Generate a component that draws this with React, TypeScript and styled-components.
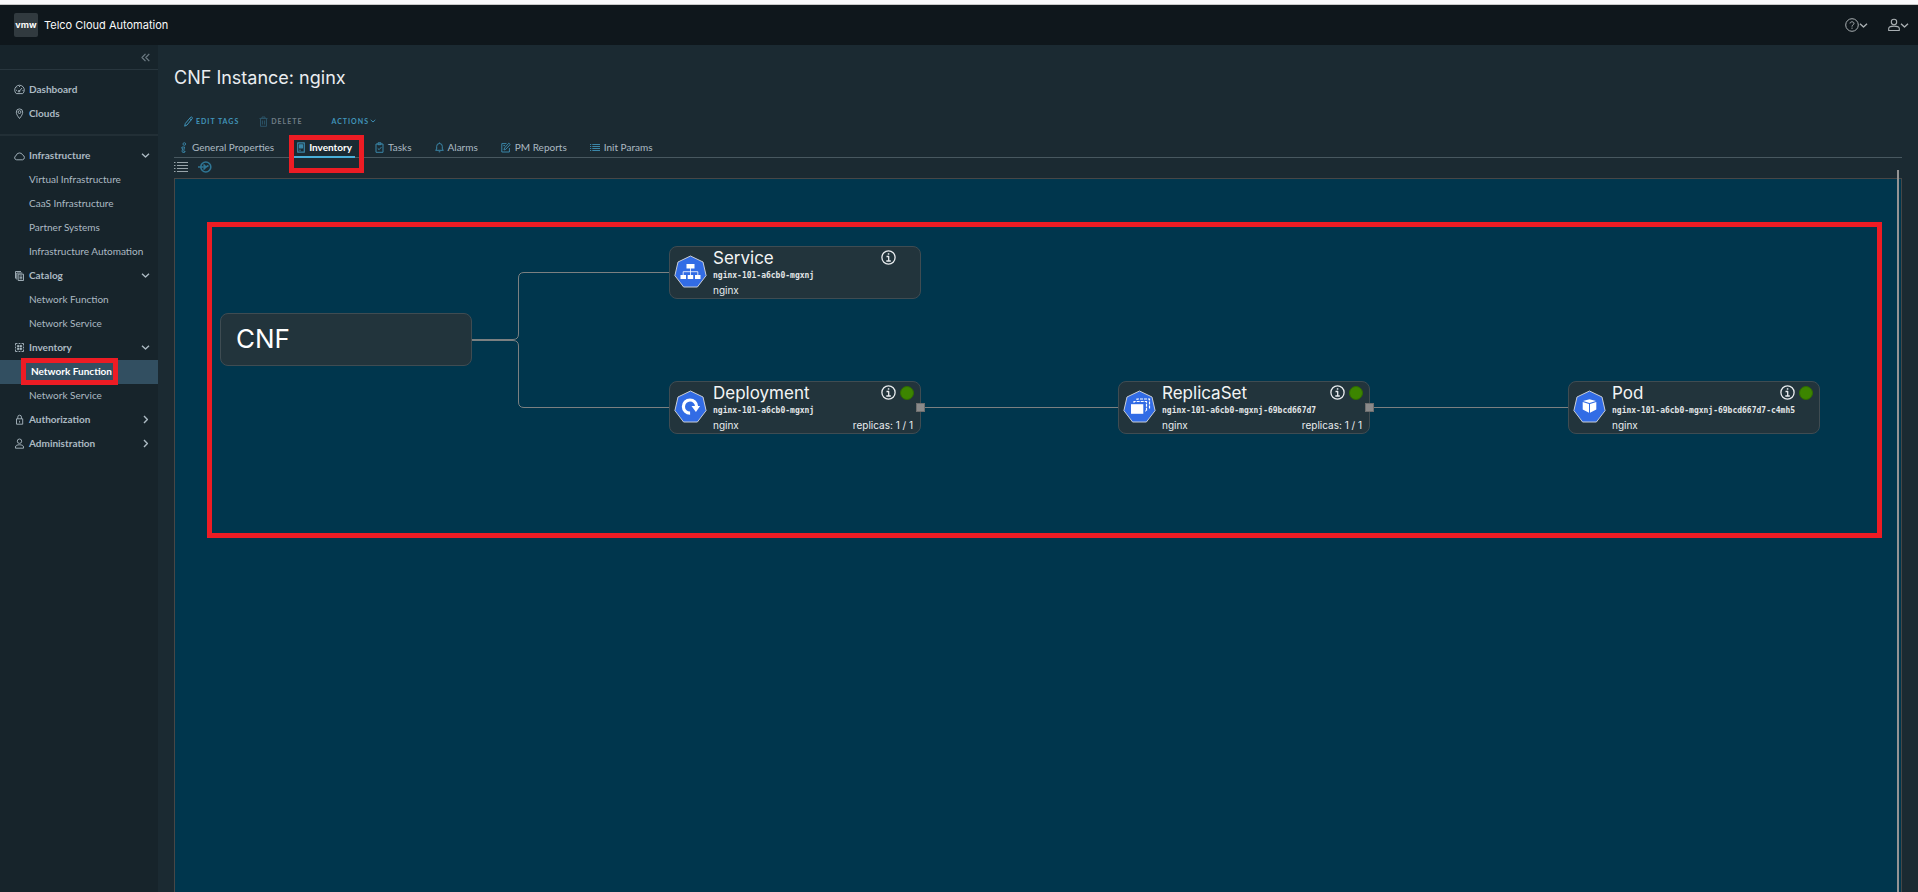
import React from "react";
import styled, { createGlobalStyle, css } from "styled-components";

const GlobalStyle = createGlobalStyle`
  *, *::before, *::after { box-sizing: border-box; }
  body {
    margin: 0;
    background: #1b2a32;
    color: #e9ecef;
    font-family: Lato, "Liberation Sans", sans-serif;
    font-size: 10px;
  }
  button { font: inherit; color: inherit; background: none; border: 0; padding: 0; cursor: pointer; }
  a { color: inherit; text-decoration: none; }
  svg { display: block; flex: none; }
`;

/* ---------- shell ---------- */

const Shell = styled.div`
  display: flex;
  flex-direction: column;
  min-height: 100vh;
`;

const TopStrip = styled.div`
  height: 5px;
  background: #f9f9fb;
  border-bottom: 1px solid #c8c8c8;
`;

const Header = styled.header`
  display: flex;
  align-items: center;
  height: 40px;
  padding: 0 9px 0 14px;
  background: #0f171c;
`;

const Brand = styled.a`
  display: flex;
  align-items: center;
  gap: 6px;
  font-family: Inter, sans-serif;
  font-size: 11px;
  color: #fafafa;
`;

const BrandMark = styled.span`
  display: grid;
  place-items: center;
  width: 24px;
  height: 24px;
  border-radius: 2px;
  background: #313a3f;
  font-size: 9px;
  font-weight: 700;
  line-height: 20px;
`;

const HeaderActions = styled.div`
  display: flex;
  gap: 20px;
  margin-left: auto;
  color: #a9afb2;
`;

const HeaderButton = styled.button`
  display: flex;
  align-items: center;
`;

const Body = styled.div`
  display: flex;
  flex: 1;
`;

/* ---------- side navigation ---------- */

const Sidebar = styled.nav`
  flex: none;
  width: 158px;
  background: #17242b;
  color: #acbac3;
`;

const CollapseRow = styled.div`
  display: flex;
  justify-content: flex-end;
  align-items: center;
  height: 25px;
  padding-right: 8px;
  border-bottom: 1px solid #28363e;
  color: #6c7a83;
`;

const NavSection = styled.div`
  padding: 8px 0;
  & + & { border-top: 2px solid #222f36; }
`;

const rowBase = css`
  display: flex;
  align-items: center;
  width: 100%;
  height: 24px;
  padding-bottom: 2px;
  line-height: 22px;
  text-align: left;
`;

const navTop = css`
  ${rowBase}
  gap: 4px;
  padding-left: 14px;
  padding-right: 8px;
  font-weight: 700;
`;

const NavTopLink = styled.a`${navTop}`;
const NavToggle = styled.button`${navTop}`;
const NavLabel = styled.span`flex: 1;`;

const NavLink = styled.a<{ $active?: boolean }>`
  ${rowBase}
  position: relative;
  padding-left: 29px;
  ${(p) => p.$active && css`
    padding-left: 31px;
    background: #324f61;
    color: #fff;
    font-weight: 700;
  `}
`;

/* ---------- page ---------- */

const Main = styled.main`
  display: flex;
  flex-direction: column;
  flex: 1;
  min-width: 0;
  padding: 21px 16px 0;
`;

const Title = styled.h1`
  margin: 0 0 19px;
  font-family: Inter, sans-serif;
  font-size: 18px;
  font-weight: 400;
  line-height: 24px;
  color: #eaedf0;
`;

const ActionBar = styled.div`
  display: flex;
  gap: 20px;
  height: 24px;
  padding-left: 10px;
`;

const ActionButton = styled.button<{ $muted?: boolean }>`
  display: flex;
  align-items: center;
  gap: 3px;
  font-size: 7px;
  font-weight: 700;
  letter-spacing: 1px;
  color: ${(p) => (p.$muted ? "#6f7d85" : "#4195bb")};
  &:last-child { gap: 1px; margin-left: 9px; }
`;

const Tabs = styled.div`
  display: flex;
  gap: 17px;
  height: 25px;
  padding-left: 3px;
  border-bottom: 1px solid #485860;
`;

const Tab = styled.button<{ $active?: boolean }>`
  position: relative;
  display: flex;
  align-items: center;
  gap: 4px;
  height: 25px;
  padding: 5px 3px 0;
  border-bottom: 2px solid ${(p) => (p.$active ? "#49afd9" : "transparent")};
  color: ${(p) => (p.$active ? "#fff" : "#acbac3")};
  font-weight: ${(p) => (p.$active ? 700 : 400)};
  svg { color: #3a86a8; }
`;

const ViewBar = styled.div`
  display: flex;
  align-items: center;
  gap: 10px;
  height: 20px;
  padding-bottom: 2px;
`;

const ViewButton = styled.button<{ $on?: boolean }>`
  color: ${(p) => (p.$on ? "#2f7695" : "#98a4aa")};
`;

/* ---------- topology ---------- */

const Canvas = styled.section`
  position: relative;
  flex: 1;
  min-height: 400px;
  border: 1px solid #474747;
  border-bottom: 0;
  background: #00364d;
`;

const ScrollLine = styled.div`
  position: absolute;
  top: -9px;
  right: 2px;
  bottom: 0;
  width: 2px;
  background: #949494;
`;

const Edges = styled.svg`
  position: absolute;
  inset: 0;
  width: 100%;
  height: 100%;
`;

const Node = styled.article<{ $x: number; $y: number }>`
  position: absolute;
  left: ${(p) => p.$x}px;
  top: ${(p) => p.$y}px;
  display: flex;
  align-items: center;
  gap: 6px;
  width: 252px;
  height: 53px;
  padding: 0 7px 1px 4px;
  border: 1px solid #3f4c52;
  border-radius: 8px;
  background: #22343c;
  font-family: Inter, sans-serif;
`;

const RootLabel = styled.h2`
  margin: 0;
  padding-left: 11px;
  font-size: 26px;
  font-weight: 400;
  line-height: 32px;
  color: #fff;
`;

const NodeBody = styled.div`
  flex: 1;
  min-width: 0;
`;

const NodeRow = styled.div`
  display: flex;
  align-items: center;
  justify-content: space-between;
  line-height: 14px;
`;

const NodeKind = styled.h2`
  margin: 0;
  font-size: 17px;
  font-weight: 400;
  line-height: 20px;
  color: #f3f4f5;
`;

const NodeName = styled.div`
  font-family: "DejaVu Sans Mono", monospace;
  font-size: 8px;
  font-weight: 700;
  line-height: 15px;
  white-space: nowrap;
  color: #e3e6e8;
`;

const NodeStatus = styled.div`
  display: grid;
  grid-template-columns: 15px 14px;
  gap: 4px;
  align-items: center;
  margin-right: -1px;
`;

const StatusDot = styled.span`
  width: 14px;
  height: 14px;
  border: 1px solid #2f6b00;
  border-radius: 50%;
  background: #3c8500;
`;

const Port = styled.span`
  position: absolute;
  right: -5px;
  top: 21px;
  width: 9px;
  height: 9px;
  border: 1px solid #6e6e6e;
  background: #8a8a8a;
`;

/* ---------- red callouts ---------- */

const callout = css`
  position: absolute;
  border: 5px solid #ed1c24;
  pointer-events: none;
`;
const NavCallout = styled.span`${callout} left: 21px; top: -2px; width: 97px; height: 27px;`;
const TabCallout = styled.span`${callout} left: -5px; right: -9px; top: 2px; height: 38px; z-index: 2;`;
const CanvasCallout = styled.div`${callout} left: 32px; right: 19px; top: 43px; height: 316px;`;

/* ---------- icons ---------- */

type IconProps = { w?: number; h?: number; vb: string; sw?: number; children: React.ReactNode };
const Icon = ({ w = 11, h = 11, vb, sw = 1, children }: IconProps) => (
  <svg width={w} height={h} viewBox={vb} fill="none" stroke="currentColor" strokeWidth={sw} strokeLinejoin="round" aria-hidden="true">
    {children}
  </svg>
);

const Chevron = ({ dir = "down", size = 9 }: { dir?: "down" | "right"; size?: number }) => (
  <Icon w={size} h={size} vb="0 0 9 9" sw={1.4}>
    <path d={dir === "down" ? "M1 2.8 4.5 6 8 2.8" : "M3 1 6.4 4.5 3 8"} />
  </Icon>
);

const icons = {
  dashboard: (
    <Icon vb="0 0 11 11" sw={0.9}>
      <path d="M2.3 9.6A4.8 4.8 0 1 1 8.7 9.6ZM5 7.6 8 4M2 6.3h1M5.5 2v1M3 3.6l.6.6M8.5 6.5h1" />
      <circle cx="5" cy="7.2" r=".8" />
    </Icon>
  ),
  clouds: (
    <Icon vb="0 0 11 11" sw={0.9}>
      <path d="M5.5 10.5C3.7 8.2 2.3 6.2 2.3 4.1a3.2 3.2 0 0 1 6.4 0c0 2.1-1.4 4.1-3.2 6.4Z" />
      <circle cx="5.5" cy="4.1" r="1.4" />
    </Icon>
  ),
  infra: (
    <Icon vb="0 0 11 11" sw={0.9}>
      <path d="M2.6 9.8a2.1 2.1 0 0 1-.5-4.100A3.500 3.500 0 0 1 8.800 5.200a2.400 2.400 0 0 1-.2 4.600Z" />
    </Icon>
  ),
  catalog: (
    <Icon vb="0 0 11 11" sw={0.9}>
      <path d="M1.5 8.5v-7H7M2.800 9.500V3h5.500" />
      <path d="M4.200 4.200h5.300v6.300H4.200ZM5.500 6h2.800M5.500 7.400h2.800M5.500 8.800h2.800" />
    </Icon>
  ),
  inventory: (
    <Icon vb="0 0 11 11" sw={0.9}>
      <path d="M1.5 3.500v-2h2M7.500 1.500h2v2M9.500 7.500v2h-2M3.500 9.500h-2v-2M4.600 1.500h1.800M4.600 9.500h1.800M1.500 4.600v1.800M9.500 4.600v1.800" />
      <path d="M3.300 3.300h1.800v1.800H3.300ZM6 3.300h1.800v1.800H6ZM3.300 6h1.800v1.800H3.300ZM6 6h1.800v1.800H6Z" fill="currentColor" strokeWidth=".4" />
    </Icon>
  ),
  lock: (
    <Icon vb="0 0 11 11" sw={0.9}>
      <path d="M2.500 4.800h6.200v5.400H2.500ZM3.800 4.800V3a1.800 1.800 0 0 1 3.600 0v1.800M5.600 6.800v1.800" />
    </Icon>
  ),
  person: (
    <Icon vb="0 0 11 11" sw={0.9}>
      <circle cx="5.5" cy="3.200" r="2.200" />
      <path d="M1.500 10.200V9c0-1.600 1.800-2.200 4-2.200s4 .6 4 2.200v1.200Z" />
    </Icon>
  ),
  info: (
    <Icon w={8} h={11} vb="0 0 8 11" sw={0.9}>
      <circle cx="4.300" cy="2" r="1.300" />
      <path d="M2 5h2.600L3.700 8.600c-.2.900.3 1.100 1.300.4v1c-1.300 1-3.300.8-2.900-1.100l.7-2.700H1.600Z" />
    </Icon>
  ),
  host: (
    <Icon w={8} h={11} vb="0 0 8 11" sw={1.2}>
      <path d="M.7.8h6.600v9.400H.7Z" />
      <path d="M2.500 2.800h3v3h-3Z" fill="currentColor" />
      <path d="M2 8.200h2" strokeWidth=".8" />
    </Icon>
  ),
  tasks: (
    <Icon w={9} h={11} vb="0 0 9 11">
      <path d="M1 2h7v8.300H1ZM3 .8h3v1.900H3ZM2.700 6.300l1.400 1.400 2.300-2.600" />
    </Icon>
  ),
  bell: (
    <Icon w={9} h={11} vb="0 0 9 11">
      <path d="M.6 8.300 1.700 7V4.300a2.800 2.800 0 0 1 5.600 0V7l1.100 1.300ZM3.700 9.800h1.600M4.500.5v1" />
    </Icon>
  ),
  report: (
    <Icon w={10} h={11} vb="0 0 10 11">
      <path d="M5.500 1.600H.8v8.400h7.600V6M3 8l.5-2L7.800 1.200 9.200 2.500 4.800 7.300ZM2.300 3.600h1.800" />
    </Icon>
  ),
  params: (
    <Icon w={10} h={11} vb="0 0 10 11" sw={1.2}>
      <path d="M0 2.500h1.200M2.300 2.500H10M0 4.500h1.200M2.300 4.500H10M0 6.500h1.200M2.300 6.500H10M0 8.500h1.200M2.300 8.500H10" />
    </Icon>
  ),
  pencil: (
    <Icon w={9} h={11} vb="0 0 9 11">
      <path d="M.7 10.200l.6-2.700 5.400-6.300c.7-.8 2.300.5 1.600 1.300L3 9ZM5.600 2.500l1.700 1.400" />
    </Icon>
  ),
  trash: (
    <Icon w={9} h={11} vb="0 0 9 11">
      <path d="M.5 2.500h8M3 2.300V1h3v1.300M1.500 2.700v7.600h6V2.700M3.400 4.500v4M5.600 4.500v4" stroke="#2b5266" />
    </Icon>
  ),
};

const glyphs: Record<string, React.ReactNode> = {
  Service: (
    <>
      <path d="M12 9h8v4.500h-8ZM6 20h5.500v4H6ZM13.200 20h5.500v4h-5.500ZM20.500 20H26v4h-5.500Z" fill="#fff" />
      <path d="M16 13v7M8.700 20v-3.300h14.600V20" fill="none" stroke="#fff" strokeWidth=".8" />
    </>
  ),
  Deployment: (
    <>
      <path d="M15.600 23.200A6.600 6.600 0 1 1 22.100 16.600" fill="none" stroke="#fff" strokeWidth="3.200" />
      <path d="M17 16h8.600l-4.200 6Z" fill="#fff" />
    </>
  ),
  ReplicaSet: (
    <>
      <path d="M13.500 10V9H26v9h-1.500M10.500 12.800v-1.300H23V21h-1.500" fill="none" stroke="#fff" strokeWidth="1.200" strokeDasharray="3 1" />
      <path d="M7.500 14.200h12.300v9.600H7.500Z" fill="#fff" />
    </>
  ),
  Pod: (
    <>
      <path d="M16 9.200 22.500 11 16 13 9.500 11Z" fill="#fff" />
      <path d="M9.200 12l6.300 2v8.800l-6.300-3.200ZM22.800 12l-6.300 2v8.800l6.300-3.200Z" fill="#fff" />
    </>
  ),
};

const KindBadge = ({ kind }: { kind: string }) => (
  <svg width="33" height="34" viewBox="-0.5 0 33 34" aria-hidden="true">
    <path
      d="M16 1 28.500 7 31.600 20.600 22.900 32H9.100L.4 20.600 3.500 7Z"
      fill="#326ce5" stroke="#c9ced6" strokeWidth="1" strokeLinejoin="round"
    />
    {glyphs[kind]}
  </svg>
);

const InfoCircle = () => (
  <Icon w={15} h={15} vb="0 0 15 15" sw={1.3}>
    <circle cx="7.5" cy="7.5" r="6.600" />
    <path d="M5.500 6.500h2.200V11M5.300 11h4.500" />
    <path d="M6.800 3.200h1.500v1.500H6.800Z" fill="currentColor" stroke="none" />
  </Icon>
);

/* ---------- data ---------- */

const groups = [
  { label: "Infrastructure", icon: icons.infra, open: true, children: ["Virtual Infrastructure", "CaaS Infrastructure", "Partner Systems", "Infrastructure Automation"] },
  { label: "Catalog", icon: icons.catalog, open: true, children: ["Network Function", "Network Service"] },
  { label: "Inventory", icon: icons.inventory, open: true, active: "Network Function", children: ["Network Function", "Network Service"] },
  { label: "Authorization", icon: icons.lock, open: false, children: [] },
  { label: "Administration", icon: icons.person, open: false, children: [] },
];

const tabs = [
  { label: "General Properties", icon: icons.info },
  { label: "Inventory", icon: icons.host, active: true },
  { label: "Tasks", icon: icons.tasks },
  { label: "Alarms", icon: icons.bell },
  { label: "PM Reports", icon: icons.report },
  { label: "Init Params", icon: icons.params },
];

const nodes = [
  { kind: "Service", name: "nginx-101-a6cb0-mgxnj", x: 494, y: 67 },
  { kind: "Deployment", name: "nginx-101-a6cb0-mgxnj", x: 494, y: 202, healthy: true, replicas: "1 / 1" },
  { kind: "ReplicaSet", name: "nginx-101-a6cb0-mgxnj-69bcd667d7", x: 943, y: 202, healthy: true, replicas: "1 / 1" },
  { kind: "Pod", name: "nginx-101-a6cb0-mgxnj-69bcd667d7-c4mh5", x: 1393, y: 202, healthy: true },
];

export default function App() {
  return (
    <>
      <GlobalStyle />
      <Shell>
        <TopStrip />
        <Header>
          <Brand href="#">
            <BrandMark>vmw</BrandMark>
            Telco Cloud Automation
          </Brand>
          <HeaderActions>
            <HeaderButton aria-label="Help">
              <Icon w={14} h={14} vb="0 0 14 14">
                <circle cx="7" cy="7" r="6.300" />
                <path d="M5 5.400C5 3.300 9 3.300 9 5.400 9 6.800 7 6.700 7 8.600M7 9.600v1.200" />
              </Icon>
              <Chevron />
            </HeaderButton>
            <HeaderButton aria-label="Account">
              <Icon w={12} h={14} vb="0 0 12 14" sw={1.1}>
                <circle cx="6" cy="4" r="2.700" />
                <path d="M.7 12.500v-2c0-1.500 2-2.400 5.300-2.400s5.300.9 5.300 2.400v2Z" />
              </Icon>
              <Chevron />
            </HeaderButton>
          </HeaderActions>
        </Header>
        <Body>
          <Sidebar>
            <CollapseRow>
              <button aria-label="Collapse menu">
                <Icon w={9} h={9} vb="0 0 9 9" sw={1.2}>
                  <path d="M4.500.8 1 4.500l3.500 3.700M8.300.8 4.800 4.500l3.500 3.700" />
                </Icon>
              </button>
            </CollapseRow>
            <NavSection>
              <NavTopLink href="#">{icons.dashboard}<NavLabel>Dashboard</NavLabel></NavTopLink>
              <NavTopLink href="#">{icons.clouds}<NavLabel>Clouds</NavLabel></NavTopLink>
            </NavSection>
            <NavSection>
              {groups.map((g) => (
                <React.Fragment key={g.label}>
                  <NavToggle aria-expanded={g.open}>
                    {g.icon}
                    <NavLabel>{g.label}</NavLabel>
                    <Chevron dir={g.open ? "down" : "right"} />
                  </NavToggle>
                  {g.children.map((c) => (
                    <NavLink key={c} href="#" $active={c === g.active}>
                      {c}
                      {c === g.active && <NavCallout />}
                    </NavLink>
                  ))}
                </React.Fragment>
              ))}
            </NavSection>
          </Sidebar>
          <Main>
            <Title>CNF Instance: nginx</Title>
            <ActionBar>
              <ActionButton>{icons.pencil}EDIT TAGS</ActionButton>
              <ActionButton $muted>{icons.trash}DELETE</ActionButton>
              <ActionButton>ACTIONS<Chevron size={6} /></ActionButton>
            </ActionBar>
            <Tabs role="tablist">
              {tabs.map((t) => (
                <Tab key={t.label} role="tab" aria-selected={!!t.active} $active={t.active}>
                  {t.icon}
                  {t.label}
                  {t.active && <TabCallout />}
                </Tab>
              ))}
            </Tabs>
            <ViewBar>
              <ViewButton aria-label="List view">
                <Icon w={14} h={12} vb="0 0 14 12">
                  <path d="M0 1.500h1.500M3 1.500h11M0 4.500h1.500M3 4.500h11M0 7.500h1.500M3 7.500h11M0 10.500h1.500M3 10.500h11" />
                </Icon>
              </ViewButton>
              <ViewButton $on aria-label="Topology view">
                <Icon w={14} h={12} vb="0 0 14 12" sw={1.6}>
                  <circle cx="7.800" cy="6" r="5" />
                  <path d="M0 6h8M5.500 3.500 8 6 5.500 8.500M8 6l2.500-1.500" />
                </Icon>
              </ViewButton>
            </ViewBar>
            <Canvas aria-label="Inventory topology">
              <Edges fill="none" stroke="#7b8081" strokeWidth="1">
                <path d="M297 160.500H338Q343.500 160.500 343.500 155V99Q343.500 93.500 349 93.500H494" />
                <path d="M297 161.500H338Q343.500 161.500 343.500 167V223Q343.500 228.500 349 228.500H494" />
                <path d="M746 228.500H944M1195 228.500H1394" />
              </Edges>
              <Node $x={45} $y={134}>
                <RootLabel>CNF</RootLabel>
              </Node>
              {nodes.map((n) => (
                <Node key={n.kind} $x={n.x} $y={n.y}>
                  <KindBadge kind={n.kind} />
                  <NodeBody>
                    <NodeRow>
                      <NodeKind>{n.kind}</NodeKind>
                      <NodeStatus>
                        <button aria-label={`About ${n.kind}`}><InfoCircle /></button>
                        {n.healthy && <StatusDot />}
                      </NodeStatus>
                    </NodeRow>
                    <NodeName>{n.name}</NodeName>
                    <NodeRow>
                      <span>nginx</span>
                      {n.replicas && <span>replicas: {n.replicas}</span>}
                    </NodeRow>
                  </NodeBody>
                  {n.replicas && <Port />}
                </Node>
              ))}
              <CanvasCallout />
              <ScrollLine />
            </Canvas>
          </Main>
        </Body>
      </Shell>
    </>
  );
}
